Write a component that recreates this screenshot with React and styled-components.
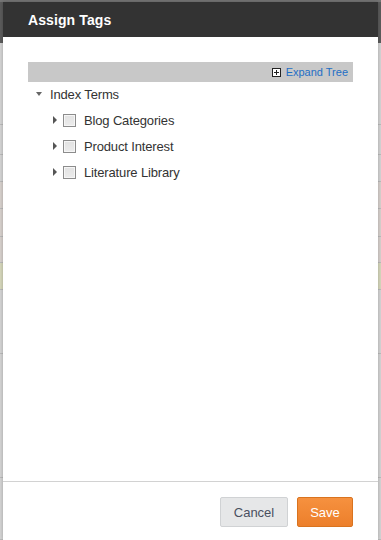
import React from 'react';
import styled, { createGlobalStyle } from 'styled-components';

const GlobalStyle = createGlobalStyle`
  html, body {
    margin: 0;
    padding: 0;
    width: 381px;
    height: 540px;
    overflow: hidden;
    font-family: "Liberation Sans", Arial, sans-serif;
  }
`;

const Page = styled.div`
  position: relative;
  width: 381px;
  height: 540px;
  overflow: hidden;
  background: #d5d5d5;
`;

const Backdrop = styled.div`
  display: flex;
  flex-direction: column;
`;

const TopBar = styled.div`
  height: 43px;
  background: #5c5c5c;
  border-top: 2px solid #767676;
  box-sizing: border-box;
`;

const tones = {
  grey: '#d5d5d5',
  pink: '#d8d2ce',
  yellow: '#d7d8bd',
};

const BackRow = styled.div`
  height: ${p => p.h}px;
  background: ${p => tones[p.tone]};
  border-bottom: 1px solid #bcbcbc;
  box-sizing: border-box;
`;

const Modal = styled.div`
  position: absolute;
  top: 2px;
  left: 3px;
  width: 375px;
  height: 538px;
  background: #fff;
  display: flex;
  flex-direction: column;
  box-shadow: 0 0 4px rgba(0, 0, 0, 0.25);
`;

const Header = styled.div`
  height: 35px;
  background: #333333;
  display: flex;
  align-items: center;
  padding: 0 25px;
  flex-shrink: 0;
`;

const Title = styled.h2`
  margin: 0;
  color: #fff;
  font-size: 14px;
  font-weight: bold;
  letter-spacing: 0.1px;
`;

const Body = styled.div`
  flex: 1;
  padding: 25px 25px 0;
`;

const TreeBar = styled.div`
  height: 20px;
  background: #c8c8c8;
  display: flex;
  align-items: center;
  justify-content: flex-end;
  padding-right: 5px;
`;

const ExpandLink = styled.a`
  display: flex;
  align-items: center;
  gap: 5px;
  color: #1f6fc5;
  font-size: 11px;
  text-decoration: none;
  cursor: pointer;
`;

const PlusBox = styled.span`
  width: 7px;
  height: 7px;
  border: 1px solid #222;
  background: #fff;
  position: relative;
  display: inline-block;

  &::before, &::after {
    content: '';
    position: absolute;
    background: #222;
  }
  &::before { left: 1px; top: 3px; width: 5px; height: 1px; }
  &::after { left: 3px; top: 1px; width: 1px; height: 5px; }
`;

const TreeList = styled.ul`
  list-style: none;
  margin: -1px 0 0;
  padding: 0;
`;

const Node = styled.li`
  height: 26px;
  display: flex;
  align-items: center;
  padding-left: ${p => p.indent}px;
  font-size: 13px;
  color: #333;
  letter-spacing: -0.15px;
`;

const Caret = styled.span`
  width: 0;
  height: 0;
  display: inline-block;
  ${p => p.open
    ? `border-left: 3.5px solid transparent;
       border-right: 3.5px solid transparent;
       border-top: 4px solid #666;
       margin-right: 8px;`
    : `border-top: 4px solid transparent;
       border-bottom: 4px solid transparent;
       border-left: 4px solid #555;
       margin-right: 6px;`}
`;

const Check = styled.span`
  width: 11px;
  height: 11px;
  border: 1px solid #8c8c8c;
  background: linear-gradient(#e2e2e2, #ececec);
  box-shadow: inset 0 0 0 1px #f6f6f6;
  margin-right: 8px;
  display: inline-block;
`;

const Footer = styled.div`
  border-top: 1px solid #d2d2d2;
  padding: 15px 25px 13px;
  display: flex;
  justify-content: flex-end;
  gap: 9px;
  flex-shrink: 0;
`;

const Button = styled.button`
  height: 30px;
  width: ${p => p.w}px;
  padding: 0;
  font-family: "Liberation Sans", Arial, sans-serif;
  font-size: 13px;
  border-radius: 2px;
  cursor: pointer;
  color: ${p => (p.primary ? '#fff' : '#4a5060')};
  background: ${p => (p.primary
    ? 'linear-gradient(#f6913f, #ec7f2b)'
    : '#e6e7e8')};
  border: 1px solid ${p => (p.primary ? '#d9731f' : '#d0d2d4')};
`;

const backRows = [
  { h: 82, tone: 'grey' },
  { h: 30, tone: 'grey' },
  { h: 27, tone: 'grey' },
  { h: 27, tone: 'pink' },
  { h: 28, tone: 'pink' },
  { h: 26, tone: 'pink' },
  { h: 27, tone: 'yellow' },
  { h: 64, tone: 'grey' },
  { h: 124, tone: 'grey' },
  { h: 62, tone: 'grey' },
];

const children = ['Blog Categories', 'Product Interest', 'Literature Library'];

export default function App() {
  return (
    <>
      <GlobalStyle />
      <Page>
        <Backdrop>
          <TopBar />
          {backRows.map((r, i) => (
            <BackRow key={i} h={r.h} tone={r.tone} />
          ))}
        </Backdrop>
        <Modal>
          <Header>
            <Title>Assign Tags</Title>
          </Header>
          <Body>
            <TreeBar>
              <ExpandLink>
                <PlusBox />
                Expand Tree
              </ExpandLink>
            </TreeBar>
            <TreeList>
              <Node indent={8}>
                <Caret open />
                Index Terms
              </Node>
              {children.map(name => (
                <Node key={name} indent={25}>
                  <Caret />
                  <Check />
                  {name}
                </Node>
              ))}
            </TreeList>
          </Body>
          <Footer>
            <Button w={68}>Cancel</Button>
            <Button primary w={56}>Save</Button>
          </Footer>
        </Modal>
      </Page>
    </>
  );
}
